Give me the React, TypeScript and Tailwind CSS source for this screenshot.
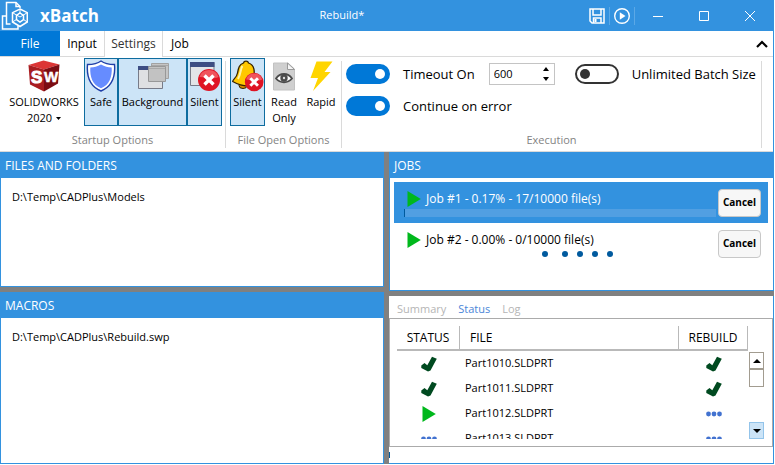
import React, { useState } from "react";

type IconProps = { className?: string };

const LogoIcon = () => (
  <svg width="28" height="32" viewBox="0 0 28 32" fill="none" stroke="#fff" strokeWidth="1.5" aria-hidden="true">
    <path d="M6 16H2.500V29H18V26" />
    <path d="M10.500 24H6.500V2.500H16L20 6.500V8" />
    <path d="M16 2.500V6.500H20" />
    <path d="M20 9L27.300 12.700V22L20 26.500L12.500 22V12.700Z" />
    <path d="M20 13L23.500 15.500V19.500L20 22L16.500 19.500V15.500Z" />
    <path d="M20 9V13M27.300 22L23.500 19.500M12.500 22L16.500 19.500M12.500 12.700L20 17L27.300 12.700" strokeWidth="1" />
  </svg>
);

const SaveIcon = () => (
  <svg width="16" height="16" viewBox="0 0 16 16" fill="none" stroke="#fff" strokeWidth="1.500" aria-hidden="true">
    <path d="M1 1H15V15H3L1 13Z" />
    <path d="M4 1V7H12V1M4.500 15V10H12V15" />
    <path d="M6.500 11V14" strokeWidth="2" />
  </svg>
);

const RunIcon = () => (
  <svg width="18" height="18" viewBox="0 0 18 18" aria-hidden="true">
    <circle cx="9" cy="9" r="7.300" fill="none" stroke="#fff" strokeWidth="1.400" />
    <path d="M6.800 5.200L12.500 9L6.800 12.800Z" fill="#fff" />
  </svg>
);

const CubeIcon = () => (
  <svg width="32" height="32" viewBox="0 0 32 32" aria-hidden="true">
    <path d="M0.500 5L15.500 0.500L31.500 4.500L16 9.500Z" fill="#dc3535" />
    <path d="M0.500 5L16 9.500V31.500L2 24.500Z" fill="#a91d20" />
    <path d="M16 9.500L31.500 4.500L30 23.500L16 31.500Z" fill="#7c0c12" />
    <g fill="#fff" stroke="#fff" fontFamily="Liberation Sans, sans-serif" fontWeight="bold">
      <text x="3" y="22.500" fontSize="17">S</text>
      <text x="16" y="22" fontSize="15" strokeWidth="0.500">W</text>
    </g>
  </svg>
);

const ShieldIcon = () => (
  <svg width="30" height="32" viewBox="0 0 30 32" aria-hidden="true">
    <path d="M15 1C11 4 6 4.500 1.500 4.500C0.500 16 3 26 15 31C27 26 29.500 16 28.500 4.500C24 4.500 19 4 15 1Z" fill="#fff" stroke="#1f3fa8" strokeWidth="1.400" />
    <path d="M15 4.500C11.500 6.700 8 7.300 4.300 7.400C3.800 17 6.500 24.500 15 28.300C23.500 24.500 26.200 17 25.700 7.400C22 7.300 18.500 6.700 15 4.500Z" fill="#668cff" />
  </svg>
);

const WindowsIcon = () => (
  <svg width="32" height="32" viewBox="0 0 32 32" aria-hidden="true">
    <path d="M1.500 6.500H25.500V28.500H1.500Z" fill="#dfe0e2" stroke="#777b88" />
    <path d="M1 6H26V10H1Z" fill="#3d4d83" />
    <path d="M14.500 3.500H31.500V18.500H14.500Z" fill="#c5c5c5" stroke="#a2a2a2" />
    <path d="M11.500 6.500H28.500V21.500H11.500Z" fill="#c2c2c2" stroke="#989898" />
    <path d="M12 8.500H28M15 5.500H31" stroke="#a8a8a8" />
  </svg>
);

const ErrorBadge = () => (
  <>
    <circle cx="19" cy="20" r="11" fill="#df1424" />
    <path d="M9.500 17A10 10 0 0 1 28.500 17C22 20 16 17 9.500 17Z" fill="#f0545c" />
    <path d="M14.500 15.500L23.500 24.500M23.500 15.500L14.500 24.500" stroke="#fff" strokeWidth="3.400" />
  </>
);

const SilentWindowIcon = () => (
  <svg width="30" height="32" viewBox="0 0 30 32" aria-hidden="true">
    <path d="M0.500 2.500H24V25.500H0.500Z" fill="#e2e4e8" stroke="#777b88" />
    <path d="M0 2H24.500V7H0Z" fill="#3d4d83" />
    <ErrorBadge />
  </svg>
);

const BellIcon = () => (
  <svg width="32" height="32" viewBox="0 0 32 32" aria-hidden="true">
    <ellipse cx="11" cy="25.500" rx="4" ry="3" fill="#d98b00" stroke="#332200" />
    <path d="M11.500 3C12 0.500 16 0.500 16.500 3C23 5 22.500 12 22 17C21.500 21 24 23 23.500 24.500C16 27.500 7 25 0.700 21.500C0.700 19 4.500 18.500 5.500 13C6.500 8 7 4.500 11.500 3Z" fill="#ffc800" stroke="#332200" strokeWidth="1.300" />
    <path d="M10.500 6C8.500 8 9 14 6 19" fill="none" stroke="#fff4a8" strokeWidth="2" />
    <g transform="translate(6 5) scale(.85)">
      <ErrorBadge />
    </g>
  </svg>
);

const ReadOnlyIcon = () => (
  <svg width="24" height="32" viewBox="0 0 24 32" aria-hidden="true">
    <path d="M1.500 3H16L22.500 9V30H1.500Z" fill="#cfcfcf" stroke="#c2c2c2" />
    <path d="M15.500 3V9.500H22.500Z" fill="#f5f5f5" stroke="#999" />
    <path d="M4 18.500C8 12.500 16 12.500 20 18.500C16 23.500 8 23.500 4 18.500Z" fill="#fff" stroke="#4b4b4b" strokeWidth="1.800" />
    <circle cx="12" cy="18" r="3.700" fill="#4b4b4b" />
    <circle cx="12" cy="18" r="1.200" fill="#ddd" />
  </svg>
);

const BoltIcon = () => (
  <svg width="24" height="32" viewBox="0 0 24 32" aria-hidden="true">
    <path d="M7.500 1.500H23.500L15.500 12H21.500L4 31L9 18H1.500Z" fill="#ffd500" />
  </svg>
);

const PlayIcon = ({ className = "" }: IconProps) => (
  <svg width="14" height="16" viewBox="0 0 14 16" className={className} role="img" aria-label="Running">
    <path d="M0.500 0L13.800 8L0.500 16Z" fill="#00b81c" />
  </svg>
);

const CheckIcon = () => (
  <svg width="16" height="16" viewBox="0 0 16 16" role="img" aria-label="Done">
    <path d="M0.300 9.500L3.500 7L6.300 9.200L11 0.800L15.800 2.800L9.500 14.500L7 15.500L0.300 12Z" fill="#004a20" />
  </svg>
);

const DotsIcon = () => (
  <svg width="16" height="6" viewBox="0 0 16 6" fill="#4272d0" role="img" aria-label="Pending">
    <circle cx="2.500" cy="3" r="2.400" />
    <circle cx="8" cy="3" r="2.400" />
    <circle cx="13.500" cy="3" r="2.400" />
  </svg>
);

const Triangle = ({ down = false }: { down?: boolean }) => (
  <svg width="8" height="4" viewBox="0 0 8 4" aria-hidden="true">
    <path d={down ? "M0 0H8L4 4Z" : "M0 4H8L4 0Z"} fill="#000" />
  </svg>
);

function RibbonGroup({ label, className = "", children }: { label: string; className?: string; children: React.ReactNode }) {
  return (
    <section aria-label={label} className={`flex flex-col ${className}`}>
      <div className="h-[70px]">{children}</div>
      <div className="pt-[2px] text-center leading-5 text-[#838383]">{label}</div>
    </section>
  );
}

function RibbonButton({ icon, lines, width, toggled = false }: { icon: React.ReactNode; lines: string[]; width: string; toggled?: boolean }) {
  const [on, setOn] = useState(toggled);
  return (
    <button
      type="button"
      aria-pressed={on}
      onClick={() => setOn(!on)}
      className={`flex h-[68px] flex-col items-center border pt-px leading-4 whitespace-nowrap ${width} ${on ? "border-[#0e6c9f] bg-[#cce4f7]" : "border-transparent"}`}
    >
      <span className="mb-[2px] h-8">{icon}</span>
      {lines.map((line) => (
        <span key={line}>{line}</span>
      ))}
    </button>
  );
}

function Toggle({ label, checked = false }: { label: string; checked?: boolean }) {
  return (
    <label className="flex items-center gap-[13px] text-[13px] leading-5 whitespace-nowrap">
      <input
        type="checkbox"
        role="switch"
        defaultChecked={checked}
        className="flex h-5 w-11 shrink-0 appearance-none items-center rounded-full border-2 border-[#333] px-[3px] before:size-[10px] before:rounded-full before:bg-[#333] checked:justify-end checked:border-[#0078d7] checked:bg-[#0078d7] checked:before:bg-white"
      />
      {label}
    </label>
  );
}

function Panel({ title, className = "", children }: { title: string; className?: string; children: React.ReactNode }) {
  return (
    <section className={`flex flex-col border border-t-0 border-[#3392df] bg-white ${className}`}>
      <h2 className="bg-[#3392df] pt-[2px] pl-1 text-xs leading-6 text-white">{title}</h2>
      {children}
    </section>
  );
}

const CancelButton = () => (
  <button type="button" className="h-7 w-[43px] shrink-0 rounded border border-[#c8c8c8] bg-[#f7f7f7] pt-px text-[10px] font-bold text-black">
    Cancel
  </button>
);

const rows = [
  { file: "Part1010.SLDPRT", status: <CheckIcon />, rebuild: <CheckIcon /> },
  { file: "Part1011.SLDPRT", status: <CheckIcon />, rebuild: <CheckIcon /> },
  { file: "Part1012.SLDPRT", status: <PlayIcon />, rebuild: <DotsIcon /> },
  { file: "Part1013.SLDPRT", status: <DotsIcon />, rebuild: <DotsIcon /> },
];

function TitleBar() {
  return (
    <header className="flex h-[31px] items-center bg-[#3392df] pr-px text-white">
      <div className="flex items-center gap-3">
        <LogoIcon />
        <h1 className="text-[17px] leading-6 font-bold">xBatch</h1>
      </div>
      <span className="flex-1 text-center">Rebuild*</span>
      <div className="flex items-center">
        <button type="button" aria-label="Save" className="px-1"><SaveIcon /></button>
        <button type="button" aria-label="Run" className="border-x border-[#5ba8e6] px-[3px]"><RunIcon /></button>
        <button type="button" aria-label="Minimize" className="flex w-[46px] justify-center">
          <svg width="10" height="10" viewBox="0 0 10 10" stroke="#fff"><path d="M0 5.500H10" /></svg>
        </button>
        <button type="button" aria-label="Maximize" className="flex w-[46px] justify-center">
          <svg width="10" height="10" viewBox="0 0 10 10" fill="none" stroke="#fff"><path d="M0.500 0.500H9.500V9.500H0.500Z" /></svg>
        </button>
        <button type="button" aria-label="Close" className="flex w-[46px] justify-center">
          <svg width="10" height="10" viewBox="0 0 10 10" stroke="#fff"><path d="M0 0L10 10M10 0L0 10" /></svg>
        </button>
      </div>
    </header>
  );
}

function Ribbon() {
  return (
    <div className="border-r border-[#3392df] bg-white">
      <nav className="flex h-[26px] border-b border-[#dadada] text-xs">
        <button type="button" className="h-[25px] w-[60px] bg-[#0078d7] text-white">File</button>
        <button type="button" className="w-11 pt-px">Input</button>
        <button type="button" aria-current="page" className="-mb-px w-[59px] border-x border-[#dadada] bg-white text-[#333]">Settings</button>
        <button type="button" className="w-[34px] pt-px">Job</button>
        <button type="button" aria-label="Collapse ribbon" className="ml-auto px-[5px]">
          <svg width="12" height="8" viewBox="0 0 12 8" fill="none" stroke="#000" strokeWidth="2.200"><path d="M1 7L6 2L11 7" /></svg>
        </button>
      </nav>
      <div className="flex h-[95px] border-b border-[#dadada] pt-px">
        <RibbonGroup label="Startup Options" className="w-[225px] shrink-0">
          <div className="flex justify-end pr-[3px]">
            <button type="button" className="flex w-20 flex-col items-center pt-[2px] leading-4">
              <span className="mb-[2px] h-8"><CubeIcon /></span>
              <span>SOLIDWORKS</span>
              <span className="flex items-center gap-1">
                2020
                <svg width="5" height="3" viewBox="0 0 5 3"><path d="M0 0H5L2.500 3Z" /></svg>
              </span>
            </button>
            <RibbonButton icon={<ShieldIcon />} lines={["Safe"]} width="w-[34px]" toggled />
            <RibbonButton icon={<WindowsIcon />} lines={["Background"]} width="w-[69px]" toggled />
            <RibbonButton icon={<SilentWindowIcon />} lines={["Silent"]} width="w-[35px]" toggled />
          </div>
        </RibbonGroup>
        <div className="my-[3px] w-px shrink-0 bg-[#dadada]" />
        <RibbonGroup label="File Open Options" className="w-[115px] shrink-0">
          <div className="flex gap-px pl-1">
            <RibbonButton icon={<BellIcon />} lines={["Silent"]} width="w-[35px]" toggled />
            <RibbonButton icon={<ReadOnlyIcon />} lines={["Read", "Only"]} width="w-9" />
            <RibbonButton icon={<BoltIcon />} lines={["Rapid"]} width="w-9" />
          </div>
        </RibbonGroup>
        <div className="my-[3px] w-px shrink-0 bg-[#dadada]" />
        <RibbonGroup label="Execution" className="min-w-0 flex-1">
          <div className="flex gap-5 pt-[5px] pl-1">
            <div className="flex flex-col gap-[11px]">
              <div className="flex h-[22px] items-center gap-[14px]">
                <Toggle label="Timeout On" checked />
                <div className="flex h-[22px] w-[66px] items-center border border-[#c4c4c4] pr-[3px] pl-1">
                  <input type="text" aria-label="Timeout" defaultValue="600" className="w-full min-w-0 bg-transparent outline-none" />
                  <span className="flex flex-col gap-px">
                    <button type="button" aria-label="Increase" className="flex h-[9px] w-[9px] items-center justify-center">
                      <svg width="6" height="4" viewBox="0 0 6 4"><path d="M0 4H6L3 0Z" /></svg>
                    </button>
                    <button type="button" aria-label="Decrease" className="flex h-[9px] w-[9px] items-center justify-center">
                      <svg width="6" height="4" viewBox="0 0 6 4"><path d="M0 0H6L3 4Z" /></svg>
                    </button>
                  </span>
                </div>
              </div>
              <Toggle label="Continue on error" checked />
            </div>
            <div className="flex h-[22px] items-center">
              <Toggle label="Unlimited Batch Size" />
            </div>
          </div>
        </RibbonGroup>
        <div className="my-[3px] mr-[11px] w-px shrink-0 bg-[#dadada]" />
      </div>
    </div>
  );
}

function Jobs() {
  return (
    <ul className="flex flex-col pt-1 pr-[5px] pb-[26px] pl-1 text-xs">
      <li className="flex h-[41px] items-center bg-[#3392df] pr-[7px] pl-[10px] text-white">
        <div className="flex-1">
          <div className="flex items-center gap-[5px] pl-[3px] leading-5">
            <PlayIcon />
            Job #1 - 0.17% - 17/10000 file(s)
          </div>
          <div role="progressbar" aria-label="Job #1" aria-valuenow={0.17} className="mr-[2px] h-2 bg-[#519fe2]">
            <div className="h-2 w-px bg-[#005a9e]" />
          </div>
        </div>
        <CancelButton />
      </li>
      <li className="flex h-[41px] items-center pr-[7px] pl-[10px]">
        <div className="flex-1">
          <div className="flex items-center gap-[5px] pl-[3px] leading-5">
            <PlayIcon />
            Job #2 - 0.00% - 0/10000 file(s)
          </div>
          <div role="progressbar" aria-label="Job #2" className="flex h-2 justify-center pl-8">
            <svg width="72" height="8" viewBox="0 0 72 8" fill="#005a9e">
              <circle cx="4" cy="4" r="3" />
              <circle cx="24" cy="4" r="3" />
              <circle cx="39" cy="4" r="3" />
              <circle cx="54" cy="4" r="3" />
              <circle cx="69" cy="4" r="3" />
            </svg>
          </div>
        </div>
        <CancelButton />
      </li>
    </ul>
  );
}

function Results() {
  return (
    <section className="flex min-w-0 flex-1 flex-col border-r border-b border-[#3392df] bg-white">
      <nav className="flex h-[22px] gap-3 pt-1 pl-2 leading-[18px] text-[#b5b5b5]">
        <button type="button">Summary</button>
        <button type="button" aria-current="page" className="text-[#4a86d8]">Status</button>
        <button type="button">Log</button>
      </nav>
      <div className="flex h-[129px] border border-[#ababab] pt-[7px] pb-[7px] pl-[7px]">
        <div className="flex-1 overflow-hidden">
          <table className="w-full table-fixed border-separate border-spacing-0">
            <thead className="text-xs">
              <tr className="h-[25px]">
                <th className="w-[63px] border-r border-b-2 border-[#b9b9b9] font-medium">STATUS</th>
                <th className="border-r border-b-2 border-[#b9b9b9] pl-[10px] text-left font-medium">FILE</th>
                <th className="w-[69px] border-r border-b-2 border-[#b9b9b9] font-medium">REBUILD</th>
              </tr>
            </thead>
            <tbody>
              {rows.map((row) => (
                <tr key={row.file} className="h-[25px]">
                  <td><span className="flex justify-center">{row.status}</span></td>
                  <td className="pl-[5px]">{row.file}</td>
                  <td><span className="flex justify-center">{row.rebuild}</span></td>
                </tr>
              ))}
            </tbody>
          </table>
        </div>
        <div className="mr-2 ml-px flex w-[15px] flex-col pt-[26px]">
          <button type="button" aria-label="Scroll up" className="flex h-[17px] items-center justify-center border border-[#a29c90]"><Triangle /></button>
          <div className="h-[18px] border border-[#a29c90]" />
          <button type="button" aria-label="Scroll down" className="mt-auto flex h-[17px] items-center justify-center border border-[#93c4ea] bg-[#cce4f7]"><Triangle down /></button>
        </div>
      </div>
      <div role="progressbar" aria-label="Overall progress" className="mt-[5px] h-[6px]">
        <div className="h-[6px] w-px bg-[#005a9e]" />
      </div>
    </section>
  );
}

export default function App() {
  return (
    <div className="min-h-screen bg-white pr-px pb-px font-['Open_Sans',sans-serif] text-[11px] text-black">
      <div className="flex min-h-[calc(100vh-1px)] flex-col">
        <TitleBar />
        <Ribbon />
        <main className="flex flex-1 gap-[5px] bg-[#808080]">
          <div className="flex flex-[384] flex-col gap-[5px]">
            <Panel title="FILES AND FOLDERS" className="min-h-[135px]">
              <ul className="px-[11px] py-[10px] leading-[18px]"><li>D:\Temp\CADPlus\Models</li></ul>
            </Panel>
            <Panel title="MACROS" className="flex-1">
              <ul className="px-[11px] py-[10px] leading-[18px]"><li>D:\Temp\CADPlus\Rebuild.swp</li></ul>
            </Panel>
          </div>
          <div className="flex min-w-0 flex-[385] flex-col gap-[5px]">
            <Panel title="JOBS">
              <Jobs />
            </Panel>
            <Results />
          </div>
        </main>
      </div>
    </div>
  );
}
